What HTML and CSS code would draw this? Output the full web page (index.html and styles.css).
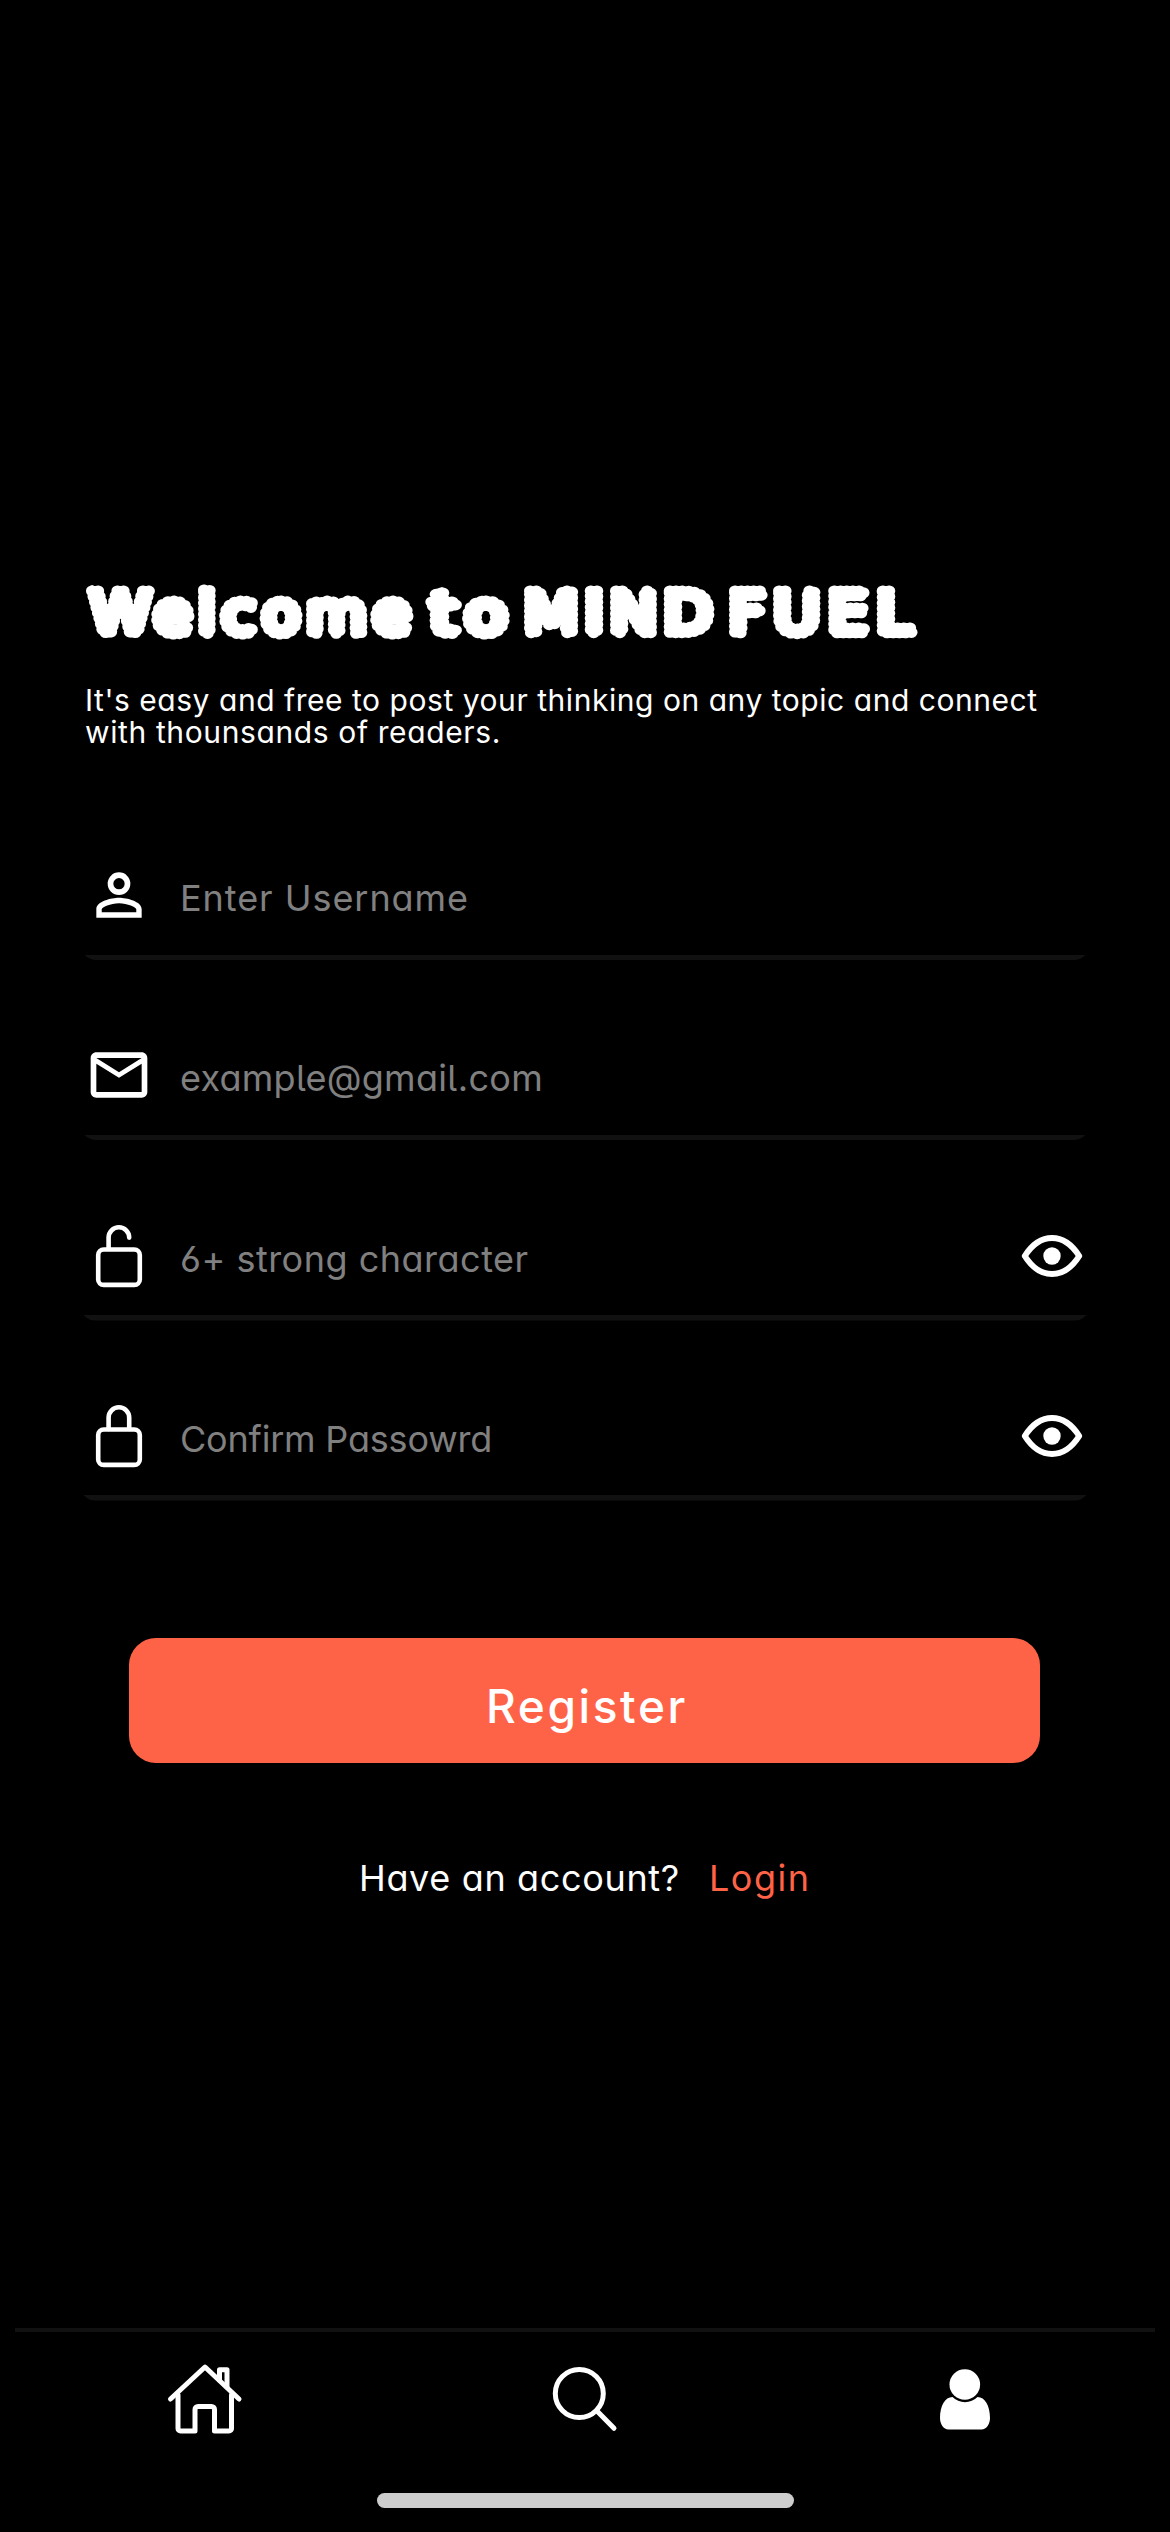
FILE: index.html
```html
<!DOCTYPE html>
<html lang="en">
<head>
<meta charset="utf-8">
<title>Register</title>
<link rel="stylesheet" href="styles.css">
</head>
<body>
<main class="page">
  <h1 class="title">
    <svg class="title-art" viewBox="0 0 840 80">
      <text transform="translate(9 63) scale(1.08 1)" textLength="297">Welcome</text>
      <text transform="translate(349 63) scale(1.2 1)" textLength="64">to</text>
      <text transform="translate(443 63) scale(1.1 1)" textLength="171">MIND</text>
      <text transform="translate(648 63) scale(1.1 1)" textLength="166">FUEL</text>
    </svg>
  </h1>
  <p class="intro"><span class="intro-a">It's easy and free to post your thinking on any topic and connect</span><br><span class="intro-b">with thounsands of readers.</span></p>

  <form class="fields">
    <div class="field">
      <svg class="icon" viewBox="0 0 24 24"><path d="M12,4A4,4 0 0,1 16,8A4,4 0 0,1 12,12A4,4 0 0,1 8,8A4,4 0 0,1 12,4M12,6A2,2 0 0,0 10,8A2,2 0 0,0 12,10A2,2 0 0,0 14,8A2,2 0 0,0 12,6M12,13C14.67,13 20,14.33 20,17V20H4V17C4,14.33 9.33,13 12,13M12,14.9C9.03,14.9 5.9,16.36 5.9,17V18.1H18.1V17C18.1,16.36 14.97,14.9 12,14.9Z"/></svg>
      <span class="hint hint-user">Enter Username</span>
    </div>
    <div class="field">
      <svg class="icon" viewBox="0 0 24 24"><path d="M22 6C22 4.9 21.1 4 20 4H4C2.9 4 2 4.9 2 6V18C2 19.1 2.9 20 4 20H20C21.1 20 22 19.1 22 18V6M20 6L12 11L4 6H20M20 18H4V8L12 13L20 8V18Z"/></svg>
      <span class="hint hint-mail">example@gmail.com</span>
    </div>
    <div class="field">
      <svg class="icon line" viewBox="0 0 68 68"><rect x="13.2" y="27.5" width="41.6" height="35.4" rx="5.5"/><path d="M23.6 27V15.6a10.3 10.3 0 0 1 20.6 0"/></svg>
      <span class="hint hint-pass">6+ strong character</span>
      <svg class="icon eye" viewBox="0 0 68 68"><path d="M6.8 34C22 10 46 10 61.2 34C46 58 22 58 6.8 34Z"/><circle cx="34" cy="34" r="8.7"/></svg>
    </div>
    <div class="field">
      <svg class="icon line" viewBox="0 0 68 68"><rect x="13.2" y="27.5" width="41.6" height="35.4" rx="5.5"/><path d="M23.6 27V15.6a10.3 10.3 0 0 1 20.6 0V27"/></svg>
      <span class="hint hint-confirm">Confirm Passowrd</span>
      <svg class="icon eye" viewBox="0 0 68 68"><path d="M6.8 34C22 10 46 10 61.2 34C46 58 22 58 6.8 34Z"/><circle cx="34" cy="34" r="8.7"/></svg>
    </div>
  </form>

  <div class="register">Register</div>
  <p class="account"><span class="question">Have an account?</span><span class="login">Login</span></p>
</main>

<nav class="tabs">
  <svg class="tab" viewBox="0 0 80 80"><g class="house"><path d="M5.5 39 40 7 74 39"/><path d="M13 35V68.5a2.5 2.5 0 0 0 2.5 2.5H30V49.5a3 3 0 0 1 3-3H46.5a3 3 0 0 1 3 3V71H64a2.5 2.5 0 0 0 2.5-2.5V35"/><path d="M54.5 20V9.8H62V27"/></g></svg>
  <svg class="tab" viewBox="0 0 80 80"><g class="lens"><circle cx="34.3" cy="33.5" r="24"/><path d="M52.5 51.5 69 68.3"/></g></svg>
  <svg class="tab" viewBox="0 0 80 80"><circle cx="39.8" cy="24.5" r="15.3"/><path d="M27.5 37C20 37 15 46 15 58C15 64 18.5 69.5 23.5 69.5H56.5C61.5 69.5 65 64 65 58C65 46 60 37 52.5 37A17.7 17.7 0 0 1 27.5 37Z"/></svg>
</nav>
<div class="home-bar"></div>
</body>
</html>
```
FILE: styles.css
```css
* { box-sizing: border-box; }

body {
  margin: 0;
  width: 1170px;
  height: 2532px;
  overflow: hidden;
  background: #000;
  color: #fff;
  font-family: Inter, "Noto Sans", sans-serif;
  font-feature-settings: "cv11" 1, "cv05" 1, "ss01" 1;
  display: flex;
  flex-direction: column;
}

.page { flex: 1; padding: 570px 79px 0; }

.title { margin: 0 0 34px 2px; height: 80px; }
.title-art { display: block; width: 840px; height: 80px; overflow: visible; }
.title-art text {
  font: 400 57px "DejaVu Sans", sans-serif;
  fill: #fff;
  stroke: #fff;
  stroke-width: 11.2;
  stroke-linecap: round;
  stroke-dasharray: 0 5.6;
}

.intro { margin: 0 0 82px 6px; font-size: 30px; line-height: 32px; white-space: nowrap; }
.intro-a { letter-spacing: 0.54px; }
.intro-b { letter-spacing: 0.62px; }

.fields { display: flex; flex-direction: column; gap: 50.3px; }
.field {
  display: flex;
  align-items: center;
  height: 130px;
  padding: 0 5px 0 6px;
  border-radius: 18px;
  background: linear-gradient(#111, #111) bottom / 100% 5.5px no-repeat;
}
.icon { flex: none; width: 68px; height: 68px; fill: #fff; }
.icon.line { fill: none; stroke: #fff; stroke-width: 4.6; stroke-linecap: round; }
.eye path { fill: none; stroke: #fff; stroke-width: 6; stroke-linejoin: round; }
.hint {
  flex: 1;
  padding: 6px 0 0 27px;
  font-size: 36px;
  line-height: 44px;
  color: #808080;
}
.hint-user { letter-spacing: 0.95px; }
.hint-mail { letter-spacing: 0.25px; }
.hint-pass { letter-spacing: 0.5px; }
.hint-confirm { letter-spacing: -0.2px; }

.register {
  display: flex;
  justify-content: center;
  align-items: center;
  width: 911px;
  height: 125px;
  margin: 137px 0 0 50px;
  padding: 11px 0 0 5px;
  border-radius: 27px;
  background: #ff6347;
  font-size: 46px;
  font-weight: 500;
  letter-spacing: 2.6px;
}

.account {
  display: flex;
  margin: 93px 0 0 280px;
  font-size: 36px;
  line-height: 44px;
}
.question { width: 350px; letter-spacing: 0.65px; }
.login { color: #ff6347; letter-spacing: 1.5px; }

.tabs {
  display: flex;
  justify-content: space-between;
  margin: 0 15px;
  padding: 28px 150px 0;
  height: 165px;
  border-top: 4px solid #111;
}
.tab { width: 80px; height: 80px; fill: #fff; }
.house, .lens { fill: none; stroke: #fff; stroke-width: 5; stroke-linecap: round; stroke-linejoin: round; }

.home-bar {
  width: 417px;
  height: 15px;
  margin: 0 0 24px 377px;
  border-radius: 8px;
  background: #cdcdcd;
}
```
